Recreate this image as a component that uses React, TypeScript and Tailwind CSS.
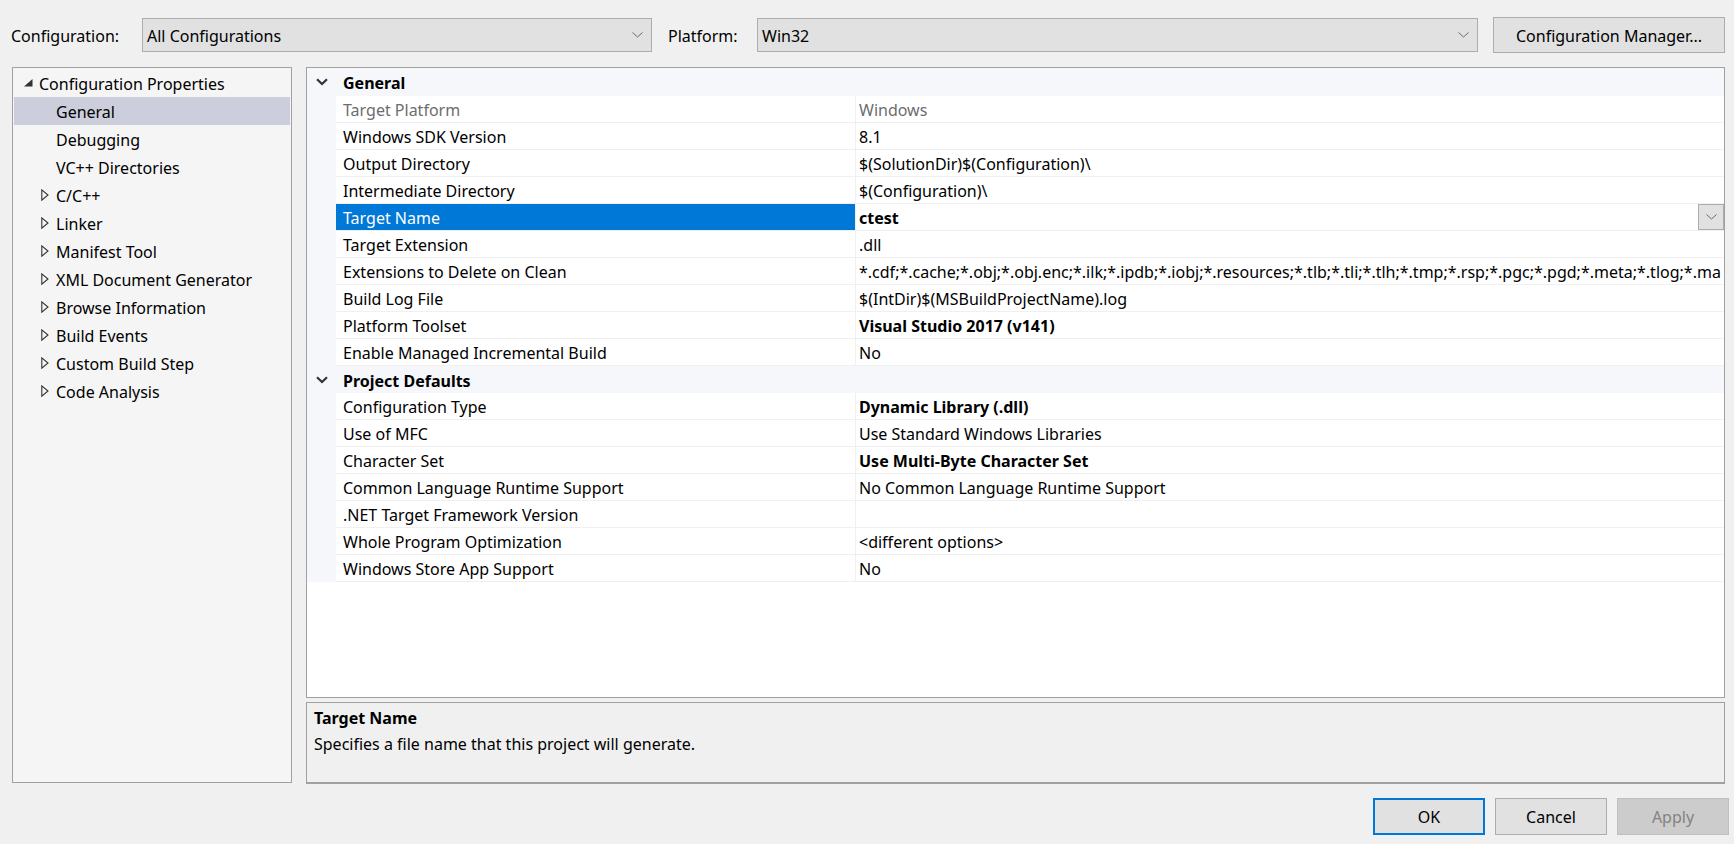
import React from 'react';

// Property pages dialog (Visual Studio style)

type Prop = { name: string; value: string; bold?: boolean; disabled?: boolean; selected?: boolean };

const generalProps: Prop[] = [
  { name: 'Target Platform', value: 'Windows', disabled: true },
  { name: 'Windows SDK Version', value: '8.1' },
  { name: 'Output Directory', value: '$(SolutionDir)$(Configuration)\\' },
  { name: 'Intermediate Directory', value: '$(Configuration)\\' },
  { name: 'Target Name', value: 'ctest', bold: true, selected: true },
  { name: 'Target Extension', value: '.dll' },
  {
    name: 'Extensions to Delete on Clean',
    value:
      '*.cdf;*.cache;*.obj;*.obj.enc;*.ilk;*.ipdb;*.iobj;*.resources;*.tlb;*.tli;*.tlh;*.tmp;*.rsp;*.pgc;*.pgd;*.meta;*.tlog;*.ma',
  },
  { name: 'Build Log File', value: '$(IntDir)$(MSBuildProjectName).log' },
  { name: 'Platform Toolset', value: 'Visual Studio 2017 (v141)', bold: true },
  { name: 'Enable Managed Incremental Build', value: 'No' },
];

const defaultProps: Prop[] = [
  { name: 'Configuration Type', value: 'Dynamic Library (.dll)', bold: true },
  { name: 'Use of MFC', value: 'Use Standard Windows Libraries' },
  { name: 'Character Set', value: 'Use Multi-Byte Character Set', bold: true },
  { name: 'Common Language Runtime Support', value: 'No Common Language Runtime Support' },
  { name: '.NET Target Framework Version', value: '' },
  { name: 'Whole Program Optimization', value: '<different options>' },
  { name: 'Windows Store App Support', value: 'No' },
];

const treeItems: { label: string; expandable?: boolean; selected?: boolean }[] = [
  { label: 'General', selected: true },
  { label: 'Debugging' },
  { label: 'VC++ Directories' },
  { label: 'C/C++', expandable: true },
  { label: 'Linker', expandable: true },
  { label: 'Manifest Tool', expandable: true },
  { label: 'XML Document Generator', expandable: true },
  { label: 'Browse Information', expandable: true },
  { label: 'Build Events', expandable: true },
  { label: 'Custom Build Step', expandable: true },
  { label: 'Code Analysis', expandable: true },
];

function ComboChevron() {
  return (
    <svg width="11" height="6" viewBox="0 0 11 6" className="shrink-0">
      <polyline points="0.5,0.5 5.5,5 10.5,0.5" fill="none" stroke="#6b6b6b" strokeWidth="1" />
    </svg>
  );
}

function Combo({ value, width }: { value: string; width: string }) {
  return (
    <div className={`${width} h-[34px] flex items-center justify-between bg-[#e1e1e1] border border-[#adadad] pl-[4px] pr-[8px]`}>
      <span className="pt-[2px]">{value}</span>
      <ComboChevron />
    </div>
  );
}

function CategoryRow({ title, tall }: { title: string; tall?: boolean }) {
  return (
    <div className={`flex items-center bg-[#f5f7fb] ${tall ? 'h-[28px]' : 'h-[27px]'}`}>
      <div className="w-[29px] flex justify-center pl-[1px]">
        <svg width="12" height="8" viewBox="0 0 12 8">
          <polyline points="1,1.2 6,6 11,1.2" fill="none" stroke="#333333" strokeWidth="2.2" />
        </svg>
      </div>
      <span className="pl-[7px] pt-[2px] font-bold">{title}</span>
    </div>
  );
}

function PropRow({ p }: { p: Prop }) {
  return (
    <div className="flex h-[27px]">
      <div className="w-[29px] shrink-0 bg-[#f5f7fb]" />
      <div className="flex flex-1 min-w-0 border-b border-[#f0f0f0]">
        <div
          className={`w-[519px] shrink-0 flex items-center pl-[7px] pt-[2px] ${
            p.selected ? 'bg-[#0078d7] text-white' : p.disabled ? 'text-[#6d6d6d]' : 'text-black'
          }`}
        >
          {p.name}
        </div>
        <div className="flex flex-1 min-w-0 items-center border-l border-[#f0f0f0]">
          <span
            className={`flex-1 min-w-0 pl-[3px] pt-[2px] whitespace-nowrap overflow-hidden ${p.bold ? 'font-bold' : ''} ${
              p.disabled ? 'text-[#6d6d6d]' : 'text-black'
            }`}
          >
            {p.value}
          </span>
          {p.selected && (
            <div className="w-[26px] h-[26px] shrink-0 flex items-center justify-center bg-[#e1e1e1] border border-[#adadad]">
              <ComboChevron />
            </div>
          )}
        </div>
      </div>
    </div>
  );
}

function TreeRow({ label, expandable, selected }: { label: string; expandable?: boolean; selected?: boolean }) {
  return (
    <div className={`h-[28px] mx-[1px] flex items-center ${selected ? 'bg-[#cccedb]' : ''}`}>
      <div className="w-[42px] shrink-0 flex justify-end pr-[7px]">
        {expandable && (
          <svg width="8" height="12" viewBox="0 0 8 12">
            <polygon points="0.8,0.8 7,6 0.8,11.2" fill="none" stroke="#333333" strokeWidth="1.1" />
          </svg>
        )}
      </div>
      <span className="pt-[2px]">{label}</span>
    </div>
  );
}

function Button({ label, primary, disabled }: { label: string; primary?: boolean; disabled?: boolean }) {
  return (
    <div
      className={`w-[112px] h-[37px] flex items-center justify-center pt-[1px] ${
        disabled
          ? 'bg-[#cccccc] border border-[#bfbfbf] text-[#838383]'
          : primary
          ? 'bg-[#e1e1e1] border-2 border-[#0078d7] text-black'
          : 'bg-[#e1e1e1] border border-[#adadad] text-black'
      }`}
    >
      {label}
    </div>
  );
}

export default function App() {
  return (
    <div className="w-[1734px] h-[844px] overflow-hidden bg-[#f0f0f0] text-black text-[16px] leading-[22px] font-['Noto_Sans',sans-serif] flex flex-col">
      {/* configuration / platform selectors */}
      <div className="mt-[17px] h-[36px] flex items-center pl-[11px]">
        <span className="w-[131px] shrink-0 pt-[2px]">Configuration:</span>
        <Combo value="All Configurations" width="w-[510px]" />
        <span className="ml-[16px] w-[89px] shrink-0 pt-[2px]">Platform:</span>
        <Combo value="Win32" width="w-[721px]" />
        <div className="ml-[15px] w-[232px] h-[36px] flex items-center justify-center pt-[2px] bg-[#e1e1e1] border border-[#adadad]">
          Configuration Manager...
        </div>
      </div>

      {/* body */}
      <div className="mt-[14px] h-[717px] flex pl-[12px]">
        <div className="w-[280px] h-[716px] shrink-0 border border-[#a0a0a0] bg-[#f5f5f5] pt-[1px]">
          <div className="h-[28px] flex items-center">
            <div className="w-[20px] shrink-0 flex justify-end">
              <svg width="10" height="8" viewBox="0 0 10 8">
                <polygon points="9.5,0 9.5,7.5 1,7.5" fill="#333333" />
              </svg>
            </div>
            <span className="pl-[6px] pt-[2px]">Configuration Properties</span>
          </div>
          {treeItems.map((t) => (
            <TreeRow key={t.label} {...t} />
          ))}
        </div>

        <div className="ml-[14px] w-[1419px] shrink-0 flex flex-col">
          <div className="h-[631px] border border-[#a0a0a0] bg-white overflow-hidden">
            <CategoryRow title="General" tall />
            {generalProps.map((p) => (
              <PropRow key={p.name} p={p} />
            ))}
            <CategoryRow title="Project Defaults" />
            {defaultProps.map((p) => (
              <PropRow key={p.name} p={p} />
            ))}
          </div>
          <div className="mt-[4px] h-[82px] border border-b-2 border-[#a0a0a0] bg-[#f0f0f0] pl-[7px] pt-[4px]">
            <div className="font-bold h-[22px] flex items-center">Target Name</div>
            <div className="mt-[4px] h-[22px] flex items-center">Specifies a file name that this project will generate.</div>
          </div>
        </div>
      </div>

      {/* dialog buttons */}
      <div className="mt-[14px] flex justify-end gap-[10px] pr-[5px]">
        <Button label="OK" primary />
        <Button label="Cancel" />
        <Button label="Apply" disabled />
      </div>
    </div>
  );
}
